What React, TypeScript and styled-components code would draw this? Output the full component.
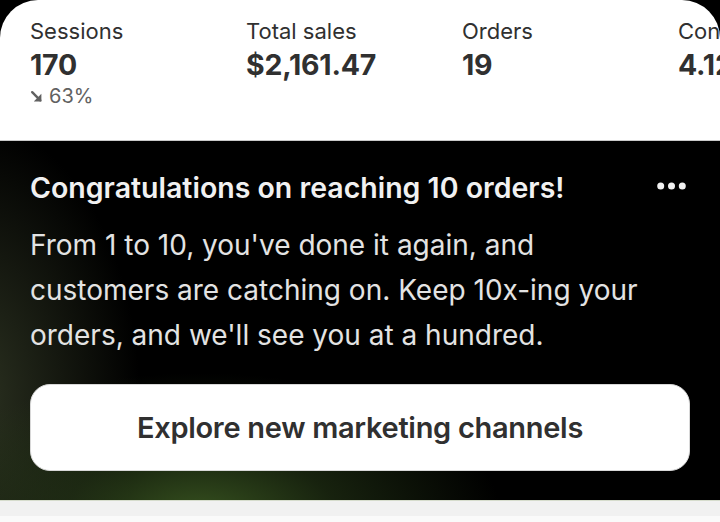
import React from 'react';
import styled, { createGlobalStyle } from 'styled-components';

const GlobalStyle = createGlobalStyle`
  html, body {
    margin: 0;
    padding: 0;
    background: #000;
    font-family: Inter, 'Noto Sans', sans-serif;
    -webkit-font-smoothing: antialiased;
  }
`;

const Page = styled.div`
  width: 720px;
  height: 522px;
  overflow: hidden;
  background: #000;
  display: flex;
  flex-direction: column;
`;

const StatsPanel = styled.div`
  height: 141px;
  box-sizing: border-box;
  background: #fff;
  border-radius: 38px 38px 0 0;
  border-bottom: 1px solid #c9c9c9;
  padding: 16px 0 0 30px;
  overflow: hidden;
  display: flex;
  flex-shrink: 0;
`;

const Stat = styled.div`
  flex: 0 0 216px;
  display: flex;
  flex-direction: column;
  white-space: nowrap;
`;

const StatLabel = styled.div`
  font-size: 22px;
  line-height: 30px;
  color: #303030;
`;

const StatValue = styled.div`
  font-size: 28.5px;
  line-height: 37px;
  font-weight: 700;
  color: #303030;
  letter-spacing: -0.2px;
`;

const StatDelta = styled.div`
  display: flex;
  align-items: center;
  gap: 6px;
  font-size: 20px;
  line-height: 26px;
  color: #616161;
`;

const PromoCard = styled.div`
  height: 359px;
  flex-shrink: 0;
  box-sizing: border-box;
  padding: 30px 30px 0 30px;
  background:
    radial-gradient(ellipse 300px 140px at 200px 372px, rgba(56, 84, 32, 0.95), rgba(42, 62, 26, 0.55) 45%, rgba(0, 0, 0, 0) 100%),
    radial-gradient(ellipse 170px 280px at -30px 260px, rgba(56, 64, 42, 0.8), rgba(0, 0, 0, 0) 100%),
    #000;
  display: flex;
  flex-direction: column;
`;

const TitleRow = styled.div`
  display: flex;
  align-items: center;
  justify-content: space-between;
`;

const Title = styled.h2`
  margin: 0;
  font-size: 28.5px;
  line-height: 34px;
  font-weight: 600;
  color: #f1f1f1;
  white-space: nowrap;
`;

const MenuButton = styled.button`
  border: 0;
  background: transparent;
  padding: 0 4px 4px 0;
  display: flex;
  cursor: pointer;
`;

const Body = styled.p`
  margin: 18px 0 0 0;
  font-size: 28px;
  line-height: 45px;
  color: #e3e3e3;
  max-width: 628px;
`;

const CtaButton = styled.button`
  margin-top: 26px;
  height: 87px;
  width: 660px;
  border: 1px solid #d8d8d8;
  border-radius: 20px;
  background: #fff;
  font-family: Inter, 'Noto Sans', sans-serif;
  font-size: 29px;
  font-weight: 600;
  color: #303030;
  letter-spacing: -0.3px;
  cursor: pointer;
`;

const GreyBand = styled.div`
  height: 15px;
  background: #f1f1f1;
  border-top: 1px solid #d6dccc;
  flex-shrink: 0;
`;

const WhiteFill = styled.div`
  flex: 1;
  background: #fafafa;
`;

const stats = [
  { label: 'Sessions', value: '170', delta: '63%' },
  { label: 'Total sales', value: '$2,161.47' },
  { label: 'Orders', value: '19' },
  { label: 'Conversion rate', value: '4.12%' },
];

function DownRightArrow() {
  return (
    <svg width="13" height="13" viewBox="0 0 12 12" fill="none">
      <path d="M2 2L9.5 9.5" stroke="#616161" strokeWidth="2.2" strokeLinecap="round" />
      <path d="M10.5 3.5V10.5H3.5Z" fill="#616161" />
    </svg>
  );
}

function Dots() {
  return (
    <svg width="29" height="8" viewBox="0 0 29 8">
      <circle cx="3.7" cy="4" r="3.5" fill="#f1f1f1" />
      <circle cx="14.5" cy="4" r="3.5" fill="#f1f1f1" />
      <circle cx="25.3" cy="4" r="3.5" fill="#f1f1f1" />
    </svg>
  );
}

export default function App() {
  return (
    <Page>
      <GlobalStyle />
      <StatsPanel>
        {stats.map((s) => (
          <Stat key={s.label}>
            <StatLabel>{s.label}</StatLabel>
            <StatValue>{s.value}</StatValue>
            {s.delta && (
              <StatDelta>
                <DownRightArrow />
                {s.delta}
              </StatDelta>
            )}
          </Stat>
        ))}
      </StatsPanel>
      <PromoCard>
        <TitleRow>
          <Title>Congratulations on reaching 10 orders!</Title>
          <MenuButton aria-label="More actions">
            <Dots />
          </MenuButton>
        </TitleRow>
        <Body>
          From 1 to 10, you've done it again, and customers are catching on. Keep 10x-ing your
          orders, and we'll see you at a hundred.
        </Body>
        <CtaButton>Explore new marketing channels</CtaButton>
      </PromoCard>
      <GreyBand />
      <WhiteFill />
    </Page>
  );
}
